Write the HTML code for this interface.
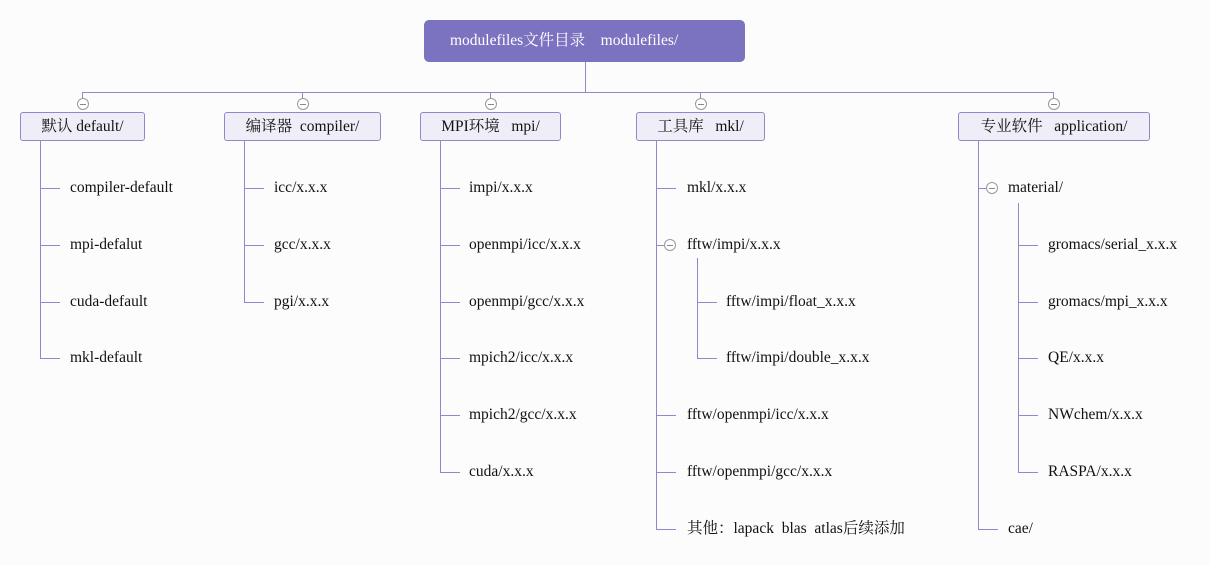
<!DOCTYPE html>
<html><head><meta charset="utf-8"><style>
body{margin:0;width:1210px;height:565px;background:#fcfcfd;position:relative;overflow:hidden;font-family:"Liberation Serif","Noto Serif CJK SC",serif;font-size:15.5px;color:#111}
.a{position:absolute}
.h{position:absolute;height:1px;background:#8f88cc}
.v{position:absolute;width:1px;background:#8f88cc}
.box{position:absolute;top:112px;height:27px;border:1px solid #8f88cc;border-radius:3px;background:#efeef8;text-align:center;line-height:27px;white-space:pre}
.c{position:absolute;width:10px;height:10px;border:1px solid #999;border-radius:50%;background:#fff}
.c:after{content:"";position:absolute;left:2px;right:2px;top:5px;height:1px;background:#888}
.t{position:absolute;line-height:18px;white-space:pre}
</style></head><body>
<div class="a" style="left:424px;top:20px;width:321px;height:42px;background:#7b72c0;border-radius:5px;color:#fff;line-height:42px;font-size:15.5px;white-space:pre;text-indent:26px">modulefiles文件目录    modulefiles/</div>
<div class="v" style="left:585px;top:62px;height:30px"></div>
<div class="h" style="left:82px;top:92px;width:972px"></div>
<div class="v" style="left:82px;top:92px;height:8px"></div>
<div class="v" style="left:302px;top:92px;height:8px"></div>
<div class="v" style="left:490px;top:92px;height:8px"></div>
<div class="v" style="left:700px;top:92px;height:8px"></div>
<div class="v" style="left:1053px;top:92px;height:8px"></div>
<div class="c" style="left:77px;top:98px"></div>
<div class="c" style="left:297px;top:98px"></div>
<div class="c" style="left:485px;top:98px"></div>
<div class="c" style="left:695px;top:98px"></div>
<div class="c" style="left:1048px;top:98px"></div>
<div class="box" style="left:20px;width:123px">默认 default/</div>
<div class="box" style="left:224px;width:155px">编译器  compiler/</div>
<div class="box" style="left:420px;width:139px">MPI环境   mpi/</div>
<div class="box" style="left:636px;width:127px">工具库   mkl/</div>
<div class="box" style="left:958px;width:190px">专业软件   application/</div>

<div class="v" style="left:40px;top:141px;height:218px"></div>
<div class="h" style="left:40px;top:188px;width:20px"></div><div class="t" style="left:70px;top:179px">compiler-default</div>
<div class="h" style="left:40px;top:245px;width:20px"></div><div class="t" style="left:70px;top:236px">mpi-defalut</div>
<div class="h" style="left:40px;top:302px;width:20px"></div><div class="t" style="left:70px;top:293px">cuda-default</div>
<div class="h" style="left:40px;top:358px;width:20px"></div><div class="t" style="left:70px;top:349px">mkl-default</div>

<div class="v" style="left:244px;top:141px;height:162px"></div>
<div class="h" style="left:244px;top:188px;width:20px"></div><div class="t" style="left:274px;top:179px">icc/x.x.x</div>
<div class="h" style="left:244px;top:245px;width:20px"></div><div class="t" style="left:274px;top:236px">gcc/x.x.x</div>
<div class="h" style="left:244px;top:302px;width:20px"></div><div class="t" style="left:274px;top:293px">pgi/x.x.x</div>

<div class="v" style="left:440px;top:141px;height:332px"></div>
<div class="h" style="left:440px;top:188px;width:20px"></div><div class="t" style="left:469px;top:179px">impi/x.x.x</div>
<div class="h" style="left:440px;top:245px;width:20px"></div><div class="t" style="left:469px;top:236px">openmpi/icc/x.x.x</div>
<div class="h" style="left:440px;top:302px;width:20px"></div><div class="t" style="left:469px;top:293px">openmpi/gcc/x.x.x</div>
<div class="h" style="left:440px;top:358px;width:20px"></div><div class="t" style="left:469px;top:349px">mpich2/icc/x.x.x</div>
<div class="h" style="left:440px;top:415px;width:20px"></div><div class="t" style="left:469px;top:406px">mpich2/gcc/x.x.x</div>
<div class="h" style="left:440px;top:472px;width:20px"></div><div class="t" style="left:469px;top:463px">cuda/x.x.x</div>

<div class="v" style="left:656px;top:141px;height:389px"></div>
<div class="h" style="left:656px;top:188px;width:20px"></div><div class="t" style="left:687px;top:179px">mkl/x.x.x</div>
<div class="h" style="left:656px;top:245px;width:8px"></div><div class="c" style="left:664px;top:239px"></div><div class="t" style="left:687px;top:236px">fftw/impi/x.x.x</div>
<div class="v" style="left:697px;top:258px;height:101px"></div>
<div class="h" style="left:697px;top:302px;width:20px"></div><div class="t" style="left:726px;top:293px">fftw/impi/float_x.x.x</div>
<div class="h" style="left:697px;top:358px;width:20px"></div><div class="t" style="left:726px;top:349px">fftw/impi/double_x.x.x</div>
<div class="h" style="left:656px;top:415px;width:20px"></div><div class="t" style="left:687px;top:406px">fftw/openmpi/icc/x.x.x</div>
<div class="h" style="left:656px;top:472px;width:20px"></div><div class="t" style="left:687px;top:463px">fftw/openmpi/gcc/x.x.x</div>
<div class="h" style="left:656px;top:529px;width:20px"></div><div class="t" style="left:687px;top:520px">其他：lapack  blas  atlas后续添加</div>

<div class="v" style="left:978px;top:141px;height:389px"></div>
<div class="h" style="left:978px;top:188px;width:8px"></div><div class="c" style="left:986px;top:182px"></div><div class="t" style="left:1008px;top:179px">material/</div>
<div class="v" style="left:1018px;top:203px;height:270px"></div>
<div class="h" style="left:1018px;top:245px;width:20px"></div><div class="t" style="left:1048px;top:236px">gromacs/serial_x.x.x</div>
<div class="h" style="left:1018px;top:302px;width:20px"></div><div class="t" style="left:1048px;top:293px">gromacs/mpi_x.x.x</div>
<div class="h" style="left:1018px;top:358px;width:20px"></div><div class="t" style="left:1048px;top:349px">QE/x.x.x</div>
<div class="h" style="left:1018px;top:415px;width:20px"></div><div class="t" style="left:1048px;top:406px">NWchem/x.x.x</div>
<div class="h" style="left:1018px;top:472px;width:20px"></div><div class="t" style="left:1048px;top:463px">RASPA/x.x.x</div>
<div class="h" style="left:978px;top:529px;width:20px"></div><div class="t" style="left:1008px;top:520px">cae/</div>
</body></html>
